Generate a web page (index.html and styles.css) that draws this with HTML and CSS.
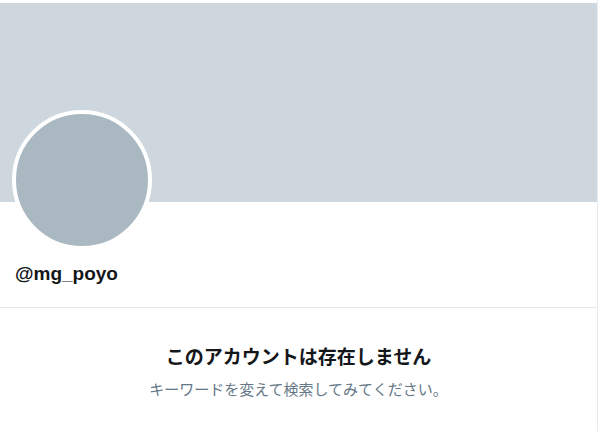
FILE: index.html
```html
<!DOCTYPE html>
<html lang="ja">
<head>
<meta charset="utf-8">
<link rel="stylesheet" href="styles.css">
</head>
<body>
<div class="page">
  <div class="banner"></div>
  <div class="profile">
    <div class="avatar"></div>
    <div class="handle">@mg_poyo</div>
  </div>
  <div class="empty">
    <div class="empty-title">このアカウントは存在しません</div>
    <div class="empty-sub">キーワードを変えて検索してみてください。</div>
  </div>
</div>
</body>
</html>
```
FILE: styles.css
```css
html, body {
  margin: 0;
  padding: 0;
  background: #ffffff;
}
body {
  font-family: "Liberation Sans", "Noto Sans CJK JP", sans-serif;
  color: #0f1419;
}
.page {
  width: 598px;
  min-height: 431px;
  border-right: 1px solid #e6ecf0;
  padding-top: 3px;
  box-sizing: border-box;
}
.banner {
  height: 199px;
  background: #cdd7dd;
}
.profile {
  display: flex;
  flex-direction: column;
  align-items: flex-start;
  padding: 0 12px;
  border-bottom: 1px solid #e6e8ea;
  height: 106px;
  box-sizing: border-box;
}
.avatar {
  width: 140px;
  height: 140px;
  margin-top: -92px;
  border: 4px solid #ffffff;
  border-radius: 50%;
  background: #aab8c2;
  box-sizing: border-box;
  flex: none;
}
.handle {
  margin-top: 13px;
  padding-left: 3px;
  font-size: 19px;
  font-weight: bold;
  line-height: 22px;
  color: #14171a;
}
.empty {
  display: flex;
  flex-direction: column;
  align-items: center;
  padding-top: 38px;
}
.empty-title {
  font-size: 19px;
  font-weight: bold;
  line-height: 24px;
  color: #14171a;
}
.empty-sub {
  margin-top: 10px;
  font-size: 15px;
  line-height: 20px;
  color: #657786;
}
```
